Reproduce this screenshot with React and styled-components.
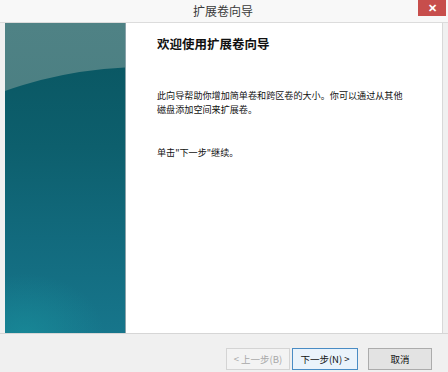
import React from "react";
import styled, { createGlobalStyle } from "styled-components";

const GlobalStyle = createGlobalStyle`
  html, body {
    margin: 0;
    padding: 0;
    background: #f0f0f0;
  }
  body {
    font-family: "Noto Sans CJK SC", "Liberation Sans", sans-serif;
  }
`;

const Window = styled.div`
  width: 448px;
  height: 372px;
  display: flex;
  flex-direction: column;
  background: #f0f0f0;
  overflow: hidden;
`;

const TitleBar = styled.div`
  height: 22px;
  display: grid;
  grid-template-columns: 28px 1fr 28px;
  align-items: start;
  background: #f8f8f8;
  padding-right: 2px;
`;

const Title = styled.div`
  grid-column: 2;
  text-align: center;
  font-size: 12px;
  line-height: 22px;
  color: #3a3a3a;
`;

const CloseButton = styled.div`
  height: 16px;
  background: #c74e4c;
  color: #fff;
  font-size: 11px;
  font-weight: bold;
  line-height: 15px;
  text-align: center;
`;

const Body = styled.div`
  flex: 1;
  display: flex;
  padding: 0 5px;
  border-top: 1px solid #dcdcdc;
  border-bottom: 1px solid #d6d6d6;
`;

/* the banner: light teal top, big dark circle swoosh below */
const Banner = styled.div`
  width: 120px;
  position: relative;
  overflow: hidden;
  background: linear-gradient(180deg, #4f8285 0%, #41777b 100%);
  border-right: 1px solid #8aa3aa;

  &::before {
    content: "";
    position: absolute;
    left: -280px;
    top: 44px;
    width: 840px;
    height: 840px;
    border-radius: 50%;
    background: linear-gradient(
      180deg,
      #0a5864 0px,
      #0d5f6d 80px,
      #126a7d 170px,
      #17768c 270px
    );
  }

  &::after {
    content: "";
    position: absolute;
    left: -60px;
    bottom: -60px;
    width: 160px;
    height: 120px;
    border-radius: 50%;
    background: radial-gradient(
      ellipse at center,
      rgba(25, 150, 160, 0.5),
      rgba(25, 150, 160, 0) 70%
    );
  }
`;

const Panel = styled.div`
  flex: 1;
  background: #ffffff;
  border-right: 1px solid #d8d8d8;
  padding: 12px 16px 0 31px;
  color: #111;
`;

const Heading = styled.div`
  font-size: 12.5px;
  font-weight: bold;
  line-height: 18px;
  margin-bottom: 35px;
`;

const Paragraph = styled.p`
  margin: 0 0 ${(p) => p.$after || 0}px 0;
  font-size: 9.1px;
  line-height: 14px;
  width: 250px;
`;

const Footer = styled.div`
  height: 38px;
  display: flex;
  justify-content: flex-end;
  align-items: flex-start;
  padding: 14px 16px 0 0;
  box-sizing: border-box;
  background: #f0f0f0;
`;

const Button = styled.div`
  width: ${(p) => p.$w}px;
  height: 22px;
  margin-left: ${(p) => p.$gap}px;
  box-sizing: border-box;
  display: flex;
  align-items: center;
  justify-content: center;
  font-size: 9.5px;
  border: 1px solid
    ${(p) => (p.$primary ? "#4a8cc4" : p.$disabled ? "#d4d4d4" : "#acacac")};
  background: ${(p) =>
    p.$primary ? "#eaf3fb" : p.$disabled ? "#f3f3f3" : "#e3e3e3"};
  color: ${(p) => (p.$disabled ? "#a8a8a8" : "#111")};
`;

export default function App() {
  return (
    <>
      <GlobalStyle />
      <Window>
        <TitleBar>
          <Title>扩展卷向导</Title>
          <CloseButton>✕</CloseButton>
        </TitleBar>
        <Body>
          <Banner />
          <Panel>
            <Heading>欢迎使用扩展卷向导</Heading>
            <Paragraph $after={29}>
              此向导帮助你增加简单卷和跨区卷的大小。你可以通过从其他磁盘添加空间来扩展卷。
            </Paragraph>
            <Paragraph>单击"下一步"继续。</Paragraph>
          </Panel>
        </Body>
        <Footer>
          <Button $w={64} $gap={0} $disabled>
            &lt; 上一步(B)
          </Button>
          <Button $w={66} $gap={2} $primary>
            下一步(N) &gt;
          </Button>
          <Button $w={64} $gap={10}>
            取消
          </Button>
        </Footer>
      </Window>
    </>
  );
}
